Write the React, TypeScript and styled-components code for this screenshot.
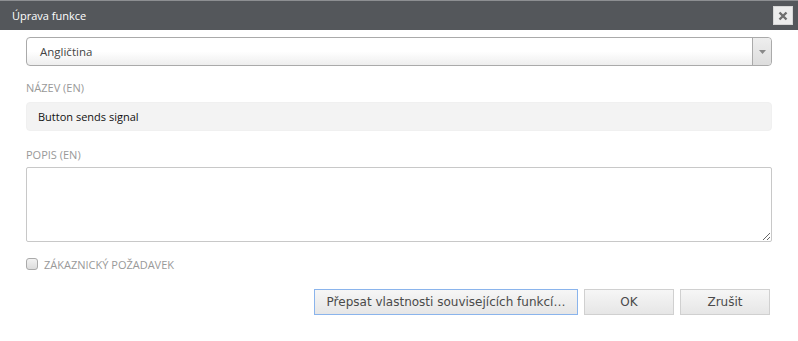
import React from "react";
import styled, { createGlobalStyle } from "styled-components";

const GlobalStyle = createGlobalStyle`
  html, body {
    margin: 0;
    padding: 0;
    background: #ffffff;
  }
  body {
    font-family: "Open Sans", "Noto Sans", sans-serif;
  }
`;

const Dialog = styled.div`
  width: 798px;
  height: 341px;
  background: #ffffff;
  display: flex;
  flex-direction: column;
  box-sizing: border-box;
`;

const TitleBar = styled.div`
  height: 30px;
  background: #54575b;
  border-top: 1px solid #8d8f92;
  box-sizing: border-box;
  display: flex;
  align-items: center;
  justify-content: space-between;
  padding: 0 5px 0 12px;
`;

const Title = styled.span`
  color: #ffffff;
  font-size: 11px;
  font-weight: 400;
`;

const CloseButton = styled.button`
  width: 20px;
  height: 19px;
  padding: 0;
  border: 1px solid #d6d6d6;
  background: #ececec;
  display: flex;
  align-items: center;
  justify-content: center;
  cursor: pointer;
`;

const Body = styled.form`
  display: flex;
  flex-direction: column;
  padding: 7px 26px 0 26px;
`;

const SelectBox = styled.div`
  height: 29px;
  box-sizing: border-box;
  border: 1px solid #aaaaaa;
  border-radius: 4px;
  background: linear-gradient(#ffffff 50%, #eeeeee 100%);
  display: flex;
  align-items: stretch;
`;

const SelectText = styled.div`
  flex: 1;
  display: flex;
  align-items: center;
  padding-left: 13px;
  font-size: 11.5px;
  color: #444444;
`;

const SelectArrow = styled.div`
  width: 18px;
  border-left: 1px solid #aaaaaa;
  background: linear-gradient(#eeeeee, #dddddd);
  border-radius: 0 4px 4px 0;
  display: flex;
  align-items: center;
  justify-content: center;
`;

const FieldLabel = styled.label<{ $top: number; $bottom: number }>`
  display: block;
  font-size: 11px;
  line-height: 16px;
  color: #999999;
  text-transform: uppercase;
  margin: ${(p) => p.$top}px 0 ${(p) => p.$bottom}px 0;
`;

const TextInput = styled.input`
  height: 29px;
  box-sizing: border-box;
  border: 1px solid #f0f0f0;
  border-radius: 4px;
  background: #f3f3f3;
  padding: 0 11px;
  font-family: inherit;
  font-size: 11px;
  color: #111111;
  outline: none;
`;

const TextArea = styled.textarea`
  height: 75px;
  box-sizing: border-box;
  border: 1px solid #c8c8c8;
  border-radius: 2px;
  background: #ffffff;
  resize: both;
  font-family: inherit;
  outline: none;
`;

const CheckRow = styled.label`
  display: flex;
  align-items: center;
  gap: 6px;
  margin-top: 14px;
  height: 16px;
  font-size: 11px;
  color: #999999;
  text-transform: uppercase;
`;

const CheckBox = styled.span`
  width: 12px;
  height: 12px;
  box-sizing: border-box;
  border: 1px solid #aaaaaa;
  border-radius: 3px;
  background: linear-gradient(#f2f2f2, #dcdcdc);
`;

const Footer = styled.div`
  display: flex;
  justify-content: flex-end;
  gap: 6px;
  margin-top: 17px;
  padding-right: 2px;
`;

const Button = styled.button<{ $w: number; $focus?: boolean }>`
  width: ${(p) => p.$w}px;
  height: 26px;
  box-sizing: border-box;
  border: 1px solid ${(p) => (p.$focus ? "#8ab4ec" : "#d0d0d0")};
  background: linear-gradient(#f6f6f6, #e6e6e6);
  color: #4a4a4a;
  font-family: "DejaVu Sans", "Liberation Sans", sans-serif;
  font-size: 12px;
  padding: 0;
  cursor: pointer;
`;

export default function App() {
  return (
    <>
      <GlobalStyle />
      <Dialog>
        <TitleBar>
          <Title>Úprava funkce</Title>
          <CloseButton type="button" aria-label="Zavřít">
            <svg width="10" height="10" viewBox="0 0 10 10">
              <path
                d="M1.5 1.5 L8.5 8.5 M8.5 1.5 L1.5 8.5"
                stroke="#6e6e6e"
                strokeWidth="2.4"
                strokeLinecap="butt"
              />
            </svg>
          </CloseButton>
        </TitleBar>
        <Body>
          <SelectBox>
            <SelectText>Angličtina</SelectText>
            <SelectArrow>
              <svg width="7" height="4" viewBox="0 0 7 4">
                <path d="M0 0 L7 0 L3.5 4 Z" fill="#888888" />
              </svg>
            </SelectArrow>
          </SelectBox>
          <FieldLabel $top={14} $bottom={6}>Název (EN)</FieldLabel>
          <TextInput defaultValue="Button sends signal" />
          <FieldLabel $top={16} $bottom={4}>Popis (EN)</FieldLabel>
          <TextArea />
          <CheckRow>
            <CheckBox />
            Zákaznický požadavek
          </CheckRow>
          <Footer>
            <Button type="button" $w={264} $focus>
              Přepsat vlastnosti souvisejících funkcí…
            </Button>
            <Button type="button" $w={90}>OK</Button>
            <Button type="button" $w={90}>Zrušit</Button>
          </Footer>
        </Body>
      </Dialog>
    </>
  );
}
